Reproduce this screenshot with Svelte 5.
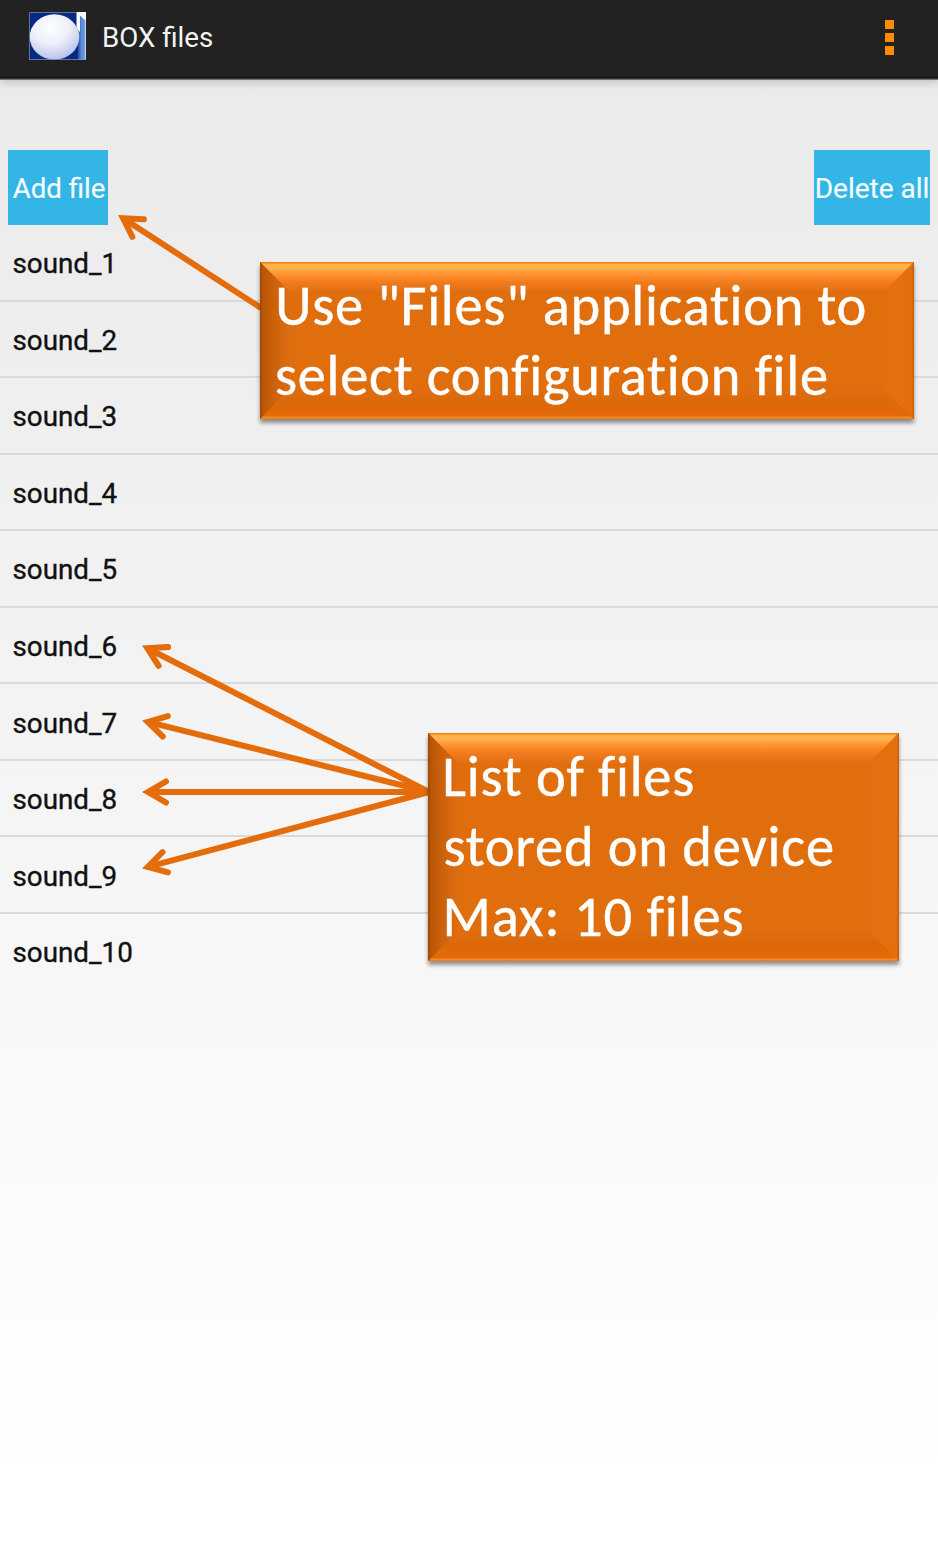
<script>
  const files = Array.from({ length: 10 }, (_, i) => `sound_${i + 1}`);

  const arrows = [
    { x: 118, y: 215, sx: 261, sy: 308 },
    { x: 142, y: 645.5, sx: 429, sy: 792 },
    { x: 142, y: 720.5, sx: 429, sy: 792 },
    { x: 142, y: 792, sx: 429, sy: 792 },
    { x: 142, y: 868.5, sx: 429, sy: 792 },
  ].map((a) => ({
    ...a,
    length: Math.hypot(a.sx - a.x, a.sy - a.y),
    angle: (Math.atan2(a.sy - a.y, a.sx - a.x) * 180) / Math.PI,
  }));

  const callouts = [
    {
      x: 260, y: 262, w: 654, h: 157,
      lines: [
        { text: 'Use "Files" application to', x: 15.3, y: 63, len: 591 },
        { text: 'select configuration file', x: 15, y: 133, len: 553 },
      ],
    },
    {
      x: 428, y: 733, w: 471, h: 228,
      lines: [
        { text: 'List of files', x: 14.3, y: 62.8, len: 252 },
        { text: 'stored on device', x: 15.5, y: 132.8, len: 390.5 },
        { text: 'Max: 10 files', x: 14.5, y: 202.8, len: 301 },
      ],
    },
  ];
  const b = 31;
</script>

<div class="screen">
  <header>
    <svg class="logo" width="58" height="48" viewBox="0 0 58 48" aria-hidden="true">
      <defs>
        <radialGradient id="ball" cx="42%" cy="28%" r="75%">
          <stop offset="0" stop-color="#fff" />
          <stop offset=".5" stop-color="#eceffa" />
          <stop offset="1" stop-color="#b4bfe6" />
        </radialGradient>
        <linearGradient id="bar" x1="0" x2="1" y1="0" y2="0">
          <stop offset="0" stop-color="#1d4fa6" />
          <stop offset=".4" stop-color="#5a8bd8" />
          <stop offset="1" stop-color="#7c9fe0" />
        </linearGradient>
      </defs>
      <rect x=".5" y=".5" width="56.5" height="47" fill="#052a86" />
      <path d="M49 0H57V48H49Z" fill="url(#bar)" />
      <path d="M47.5 0H57V9L51 3.5V20L47.5 17Z" fill="#f7f9ff" />
      <path d="M56.5 8V48" stroke="#c4d2f2" stroke-width="1" />
      <ellipse cx="25.5" cy="25" rx="24.8" ry="22.7" fill="url(#ball)" />
      <path d="M.5 48V.5H48" fill="none" stroke="#7884ad" stroke-width=".8" />
      <path d="M0 47.6H57" stroke="#8495c0" stroke-width=".8" />
    </svg>
    <h1>BOX files</h1>
    <div class="overflow"><i></i><i></i><i></i></div>
  </header>

  <div class="actions">
    <button class="add"><span>Add file</span></button>
    <button class="delete"><span>Delete all</span></button>
  </div>

  <ul>
    {#each files as file}
      <li><span>{file}</span></li>
    {/each}
  </ul>

  <svg class="notes" width="938" height="1553" viewBox="0 0 938 1553">
    <defs>
      <linearGradient id="top" x1="0" x2="0" y1="0" y2="1">
        <stop offset="0" stop-color="#f07a0c" />
        <stop offset=".04" stop-color="#f98a1c" />
        <stop offset=".07" stop-color="#ffae43" />
        <stop offset=".16" stop-color="#ffb84f" />
        <stop offset=".28" stop-color="#ffa443" />
        <stop offset=".45" stop-color="#ff8b2a" />
        <stop offset=".68" stop-color="#ee7a1c" />
        <stop offset="1" stop-color="#e06e11" />
      </linearGradient>
      <linearGradient id="left">
        <stop offset="0" stop-color="#9c4603" />
        <stop offset=".1" stop-color="#bb5707" />
        <stop offset=".5" stop-color="#cd630d" />
        <stop offset="1" stop-color="#e06e11" />
      </linearGradient>
      <linearGradient id="right">
        <stop offset="0" stop-color="#e06e11" />
        <stop offset=".5" stop-color="#e5700f" />
        <stop offset=".92" stop-color="#e56e0c" />
        <stop offset="1" stop-color="#c85c06" />
      </linearGradient>
      <linearGradient id="bottom" x1="0" x2="0" y1="0" y2="1">
        <stop offset="0" stop-color="#e06e11" />
        <stop offset=".45" stop-color="#dc6808" />
        <stop offset=".9" stop-color="#e36a06" />
        <stop offset=".94" stop-color="#ff8a24" />
        <stop offset="1" stop-color="#ed7510" />
      </linearGradient>
      <filter id="shadow" x="-5%" y="-8%" width="110%" height="120%">
        <feDropShadow dx="0" dy="4" stdDeviation="2.2" flood-color="#000" flood-opacity=".42" />
      </filter>
    </defs>

    {#each arrows as a}
      <g transform="translate({a.x} {a.y}) rotate({a.angle})" stroke="#e46c0a" stroke-width="6" fill="none">
        <path d="M6 0H{a.length}" />
        <path d="M24 -10.5L6 0L24 10.5" stroke-linecap="round" stroke-linejoin="miter" />
      </g>
    {/each}

    {#each callouts as c}
      <g transform="translate({c.x} {c.y})">
        <rect width={c.w} height={c.h} fill="#e06e11" filter="url(#shadow)" />
        <path d="M0 0H{c.w}L{c.w - b} {b}H{b}Z" fill="url(#top)" />
        <path d="M0 {c.h}H{c.w}L{c.w - b} {c.h - b}H{b}Z" fill="url(#bottom)" />
        <path d="M0 0L{b} {b}V{c.h - b}L0 {c.h}Z" fill="url(#left)" />
        <path d="M{c.w} 0L{c.w - b} {b}V{c.h - b}L{c.w} {c.h}Z" fill="url(#right)" />
        {#each c.lines as l}
          <text x={l.x} y={l.y} textLength={l.len} lengthAdjust="spacing">{l.text}</text>
        {/each}
      </g>
    {/each}
  </svg>
</div>

<style>
  :global(body) { margin: 0; }
  .screen {
    position: relative;
    width: 938px;
    height: 1553px;
    overflow: hidden;
    background: linear-gradient(#eaeaea 80px, #fefefe 1440px, #fff);
    font-family: Roboto, sans-serif;
    font-size: 28px;
  }
  header {
    box-sizing: border-box;
    height: 80px;
    padding: 0 44px 5px 29px;
    display: flex;
    align-items: center;
    background: linear-gradient(#222 76px, #0c0c0c 78px, #5a5a5a 79px, #8b8b8b);
    box-shadow: 0 1px 9px rgba(0, 0, 0, .23);
  }
  .logo { flex: none; margin-top: -3px; }
  h1 {
    margin: 0 0 0 15px;
    font-size: 27.7px;
    font-weight: 400;
    line-height: 34px;
    color: #f3f3f3;
  }
  .overflow { margin-left: auto; display: grid; gap: 4px; }
  .overflow i { width: 9px; height: 9px; background: #ff8c00; }
  .actions {
    display: flex;
    justify-content: space-between;
    padding: 70px 8px 0;
  }
  button {
    display: flex;
    justify-content: center;
    align-items: center;
    box-sizing: border-box;
    height: 75px;
    padding: 2px 0 0;
    border: 0;
    background: #33b5e5;
    color: #f5fbfe;
    font: 28px Roboto, sans-serif;
    white-space: nowrap;
    -webkit-text-stroke: .2px currentColor;
  }
  .add { width: 100px; padding-left: 2px; font-size: 27.6px; }
  .delete { width: 116px; }
  ul { margin: 0; padding: 0; list-style: none; }
  li {
    box-sizing: border-box;
    height: 76.55px;
    padding: 3px 0 0 12.5px;
    display: flex;
    align-items: center;
    border-bottom: 2px solid #dadada;
    color: #111;
    font-size: 27.8px;
    -webkit-text-stroke: .35px currentColor;
  }
  li:last-child { border-color: transparent; }
  .notes { position: absolute; inset: 0; pointer-events: none; }
  text {
    font-family: Carlito, Lato, sans-serif;
    font-size: 56.5px;
    fill: #fff;
    stroke: #fff;
    stroke-width: .4px;
    font-variant-ligatures: none;
  }
</style>
